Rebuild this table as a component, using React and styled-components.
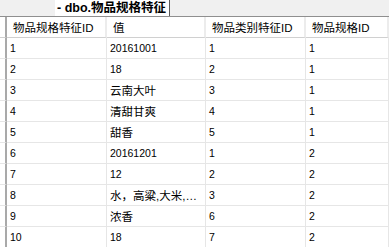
import React from 'react';
import styled, { createGlobalStyle } from 'styled-components';

const Global = createGlobalStyle`
    html, body {
        margin: 0;
        padding: 0;
        background: #ffffff;
        overflow: hidden;
    }
    body {
        font-family: "Liberation Sans", "Noto Sans CJK SC", sans-serif;
        color: #000;
    }
`;

const Style = {
    Page: styled.div`
        width: 389px;
        height: 247px;
        display: flex;
        flex-direction: column;
        background: #ffffff;
    `,
    TabStrip: styled.div`
        height: 16px;
        display: flex;
        padding-left: 55px;
        background: #f0f0f0;
        border-bottom: 1px solid #8f8f8f;
    `,
    Tab: styled.div`
        height: 16px;
        padding: 0 3px 0 2px;
        background: #ffffff;
        border-right: 1px solid #5a5a5a;
        font-family: "Liberation Sans", "Noto Sans CJK SC", sans-serif;
        font-weight: bold;
        font-size: 12.5px;
        line-height: 16px;
        white-space: nowrap;
    `,
    Spacer: styled.div`
        height: 2px;
        background: #f0f0f0;
    `,
    Grid: styled.div`
        display: grid;
        grid-template-columns: 7px 100px 99px 100px 83px;
        grid-auto-rows: 21px;
    `,
    Selector: styled.div`
        border-right: 2px solid #a9a9a9;
        border-bottom: 1px solid ${(p) => (p.$head ? '#d0d0d0' : '#e6e6e6')};
        background: #ffffff;
    `,
    HeadCell: styled.div`
        display: flex;
        align-items: center;
        padding-left: 6px;
        min-width: 0;
        background: #ffffff;
        border-right: 2px solid #ececec;
        border-bottom: 1px solid #d0d0d0;
        font-size: 11.5px;
        white-space: nowrap;
        overflow: hidden;
    `,
    Cell: styled.div`
        display: flex;
        align-items: center;
        padding-left: 3px;
        min-width: 0;
        border-right: 1px solid #e6e6e6;
        border-bottom: 1px solid #e6e6e6;
        font-size: ${(p) => (p.$cjk ? '11.5px' : '10.5px')};
        white-space: nowrap;
        overflow: hidden;
    `,
};

const columns = ['物品规格特征ID', '值', '物品类别特征ID', '物品规格ID'];

const rows = [
    ['1', '20161001', '1', '1'],
    ['2', '18', '2', '1'],
    ['3', '云南大叶', '3', '1'],
    ['4', '清甜甘爽', '4', '1'],
    ['5', '甜香', '5', '1'],
    ['6', '20161201', '1', '2'],
    ['7', '12', '2', '2'],
    ['8', '水，高粱,大米,…', '3', '2'],
    ['9', '浓香', '6', '2'],
    ['10', '18', '7', '2'],
];

const isCjk = (s) => /[^\x00-\x7f]/.test(s);

const App = () => {
    return (
        <>
            <Global />
            <Style.Page>
                <Style.TabStrip>
                    <Style.Tab>- dbo.物品规格特征</Style.Tab>
                </Style.TabStrip>
                <Style.Spacer />
                <Style.Grid>
                    <Style.Selector $head />
                    {columns.map((c) => (
                        <Style.HeadCell key={c}>{c}</Style.HeadCell>
                    ))}
                    {rows.map((r) => (
                        <React.Fragment key={r[0]}>
                            <Style.Selector />
                            {r.map((v, i) => (
                                <Style.Cell key={i} $cjk={isCjk(v)}>
                                    {v}
                                </Style.Cell>
                            ))}
                        </React.Fragment>
                    ))}
                </Style.Grid>
            </Style.Page>
        </>
    );
};

export default App;
